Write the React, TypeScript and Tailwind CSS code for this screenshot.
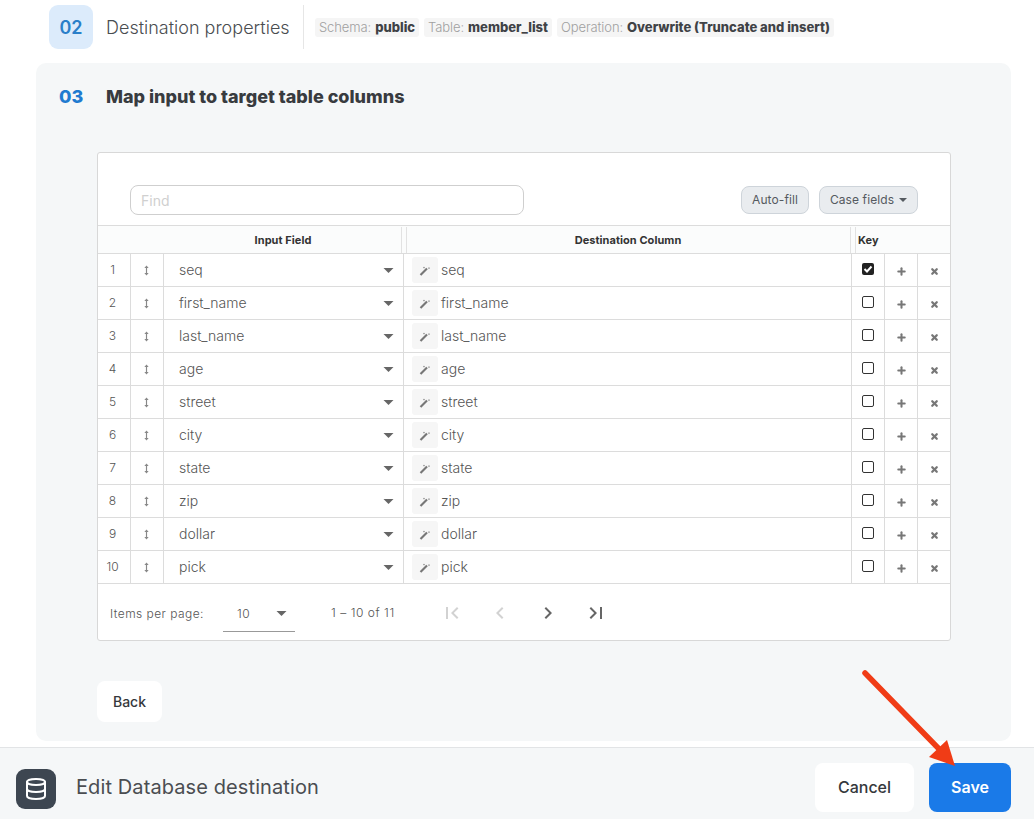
import { Database, Plus, X } from "lucide-react"

const fields = ["seq", "first_name", "last_name", "age", "street", "city", "state", "zip", "dollar", "pick"]

const cols = "grid grid-cols-[33px_33px_240px_448px_33px_33px_1fr]"

function Chip({ label, value }: { label: string; value: string }) {
  return (
    <span className="h-[19px] flex items-center px-[4px] rounded-[3px] bg-[#f5f5f5] text-[13px] whitespace-nowrap">
      <span className="text-[#a0a0a0] font-light tracking-[-0.1px]">{label}:</span>
      <span className="ml-[4px] font-extrabold text-[#3f4246]">{value}</span>
    </span>
  )
}

function Caret({ className }: { className: string }) {
  return (
    <svg viewBox="0 0 10 5" className={className}>
      <path d="M0 0h10L5 5z" fill="currentColor" />
    </svg>
  )
}

function Grip() {
  return (
    <svg viewBox="0 0 6 12" className="w-[5px] h-[11px] text-[#888]">
      <path d="M3 0l2.600 3H3.700v6h1.900L3 12 .4 9h1.900V3H.4z" fill="currentColor" />
    </svg>
  )
}

function Wand() {
  return (
    <svg viewBox="0 0 12 12" className="w-[12px] h-[12px] text-[#777]">
      <path d="M1.500 11L8 4.500" stroke="currentColor" strokeWidth="2.200" fill="none" />
      <path d="M5 2.500l.3.800.8.300-.8.300-.3.800-.3-.8-.8-.3.8-.3zM10 3l.3.800.8.300-.8.300-.3.800-.3-.8-.8-.3.8-.3z" fill="currentColor" />
    </svg>
  )
}

function PageIcon({ d, muted }: { d: string; muted?: boolean }) {
  return (
    <span className="w-[48px] h-[24px] flex items-center justify-center">
      <svg viewBox="0 0 24 24" className={`w-[24px] h-[24px] ${muted ? "text-[#d2d2d2]" : "text-[#666]"}`}>
        <path d={d} fill="currentColor" />
      </svg>
    </span>
  )
}

function Row({ index, name }: { index: number; name: string }) {
  return (
    <div className={`${cols} h-[33px] border-b border-[#dcdcdc] text-[14px] font-light text-[#555]`}>
      <div className="border-r border-[#dcdcdc] flex items-center justify-center pr-[3px] pb-[1px] text-[12px]">{index}</div>
      <div className="border-r border-[#dcdcdc] flex items-center justify-center pr-[1px]">
        <Grip />
      </div>
      <div className="border-r border-[#dcdcdc] flex items-center justify-between pl-[15px] pr-[9px]">
        <span className="pb-[2px]">{name}</span>
        <Caret className="w-[11px] h-[5px] text-[#666]" />
      </div>
      <div className="border-r border-[#dcdcdc] flex items-center pl-[8px]">
        <span className="w-[26px] h-[26px] rounded-[3px] bg-[#f6f6f6] flex items-center justify-center">
          <Wand />
        </span>
        <span className="ml-[3px] pb-[2px]">{name}</span>
      </div>
      <div className="border-r border-[#dcdcdc] flex items-center justify-center pb-[3px]">
        {index === 1 ? (
          <span className="w-[12px] h-[12px] rounded-[2px] bg-[#222] flex items-center justify-center">
            <svg viewBox="0 0 12 12" className="w-[12px] h-[12px]">
              <path d="M2.500 6l2.500 2.500L9.500 3.500" stroke="#fff" strokeWidth="2" fill="none" />
            </svg>
          </span>
        ) : (
          <span className="w-[12px] h-[12px] rounded-[2px] border border-[#333] bg-white" />
        )}
      </div>
      <div className="border-r border-[#dcdcdc] flex items-center justify-center pt-[2px]">
        <Plus size={11} strokeWidth={4.500} className="text-[#777]" />
      </div>
      <div className="flex items-center justify-center pt-[2px]">
        <X size={9} strokeWidth={6} className="text-[#777]" />
      </div>
    </div>
  )
}

export default function App() {
  return (
    <div className="relative h-[819px] w-[1034px] overflow-hidden bg-white flex flex-col font-['Inter',sans-serif]">
      {/* step 02 */}
      <div className="h-[63px] shrink-0 flex items-start pt-[5px] pl-[49px]">
        <div className="w-[44px] h-[44px] rounded-[9px] bg-[#dcebfb] flex items-center justify-center text-[18px] font-semibold text-[#2a7fc9]">
          02
        </div>
        <div className="ml-[13px] h-[44px] flex items-center pr-[12px] border-r border-[#e6e6e6] text-[18px] font-light text-[#4a4d50] w-[198px] whitespace-nowrap">
          Destination properties
        </div>
        <div className="ml-[11px] h-[44px] flex items-center gap-[5px] pt-[1px]">
          <Chip label="Schema" value="public" />
          <Chip label="Table" value="member_list" />
          <Chip label="Operation" value="Overwrite (Truncate and insert)" />
        </div>
      </div>

      {/* step 03 */}
      <div className="ml-[36px] w-[975px] h-[678px] shrink-0 rounded-[10px] bg-[#f5f7f8] flex flex-col">
        <div className="h-[89px] shrink-0 flex items-start pt-[23px] pl-[23px]">
          <span className="w-[47px] text-[18px] leading-[22px] font-extrabold text-[#1f7bd0]">03</span>
          <span className="text-[18px] leading-[22px] font-extrabold text-[#383b3f]">Map input to target table columns</span>
        </div>

        <div className="ml-[61px] w-[854px] h-[489px] shrink-0 bg-white border border-[#d8d8d8] rounded-[3px] flex flex-col">
          <div className="h-[72px] shrink-0 flex items-start pl-[32px] pr-[32px] pt-[32px]">
            <div className="w-[394px] h-[30px] rounded-[8px] border border-[#cfcfcf] flex items-center px-[10px] text-[14px] text-[#d0d0d0]">
              Find
            </div>
            <div className="ml-auto mt-[1px] flex items-center gap-[10px] text-[12px] tracking-[0.1px] text-[#555a60]">
              <button className="h-[28px] w-[68px] rounded-[8px] border border-[#ced4da] bg-[#e9ecef]">Auto-fill</button>
              <button className="h-[28px] w-[99px] rounded-[8px] border border-[#ced4da] bg-[#e9ecef] flex items-center justify-center gap-[5px]">
                Case fields
                <Caret className="w-[8px] h-[4px]" />
              </button>
            </div>
          </div>

          <div className={`${cols} h-[29px] shrink-0 border-y border-[#dcdcdc] bg-[#fbfcfc] text-[11px] font-bold tracking-[0.05px] text-[#333]`}>
            <div className="relative col-span-3 flex items-center pl-[66px] pt-[1px]">
              <span className="w-[238px] text-center">Input Field</span>
              <span className="absolute right-[2px] top-[1px] bottom-0 w-[1px] bg-[#e2e2e2]" />
            </div>
            <div className="relative flex items-center justify-center pt-[1px]">
              <span className="absolute left-[2px] top-[1px] bottom-0 w-[1px] bg-[#e2e2e2]" />
              Destination Column
              <span className="absolute right-[1px] top-[1px] bottom-0 w-[1px] bg-[#e2e2e2]" />
            </div>
            <div className="relative col-span-3 flex items-center pl-[6px] pt-[1px]">
              <span className="absolute left-[3px] top-[1px] bottom-0 w-[1px] bg-[#e2e2e2]" />
              Key
            </div>
          </div>

          {fields.map((name, i) => (
            <Row key={name} index={i + 1} name={name} />
          ))}

          <div className="flex-1 flex items-center pl-[12px] pt-[1px] text-[#555] font-light text-[12px] tracking-[0.45px]">
            <span className="w-[113px] pt-[2px] whitespace-nowrap">Items per page:</span>
            <div className="w-[72px] h-[36px] mt-[3px] border-b border-[#999] flex items-center justify-between pl-[14px] pr-[8px]">
              <span>10</span>
              <Caret className="w-[11px] h-[5px] text-[#666]" />
            </div>
            <span className="ml-[36px] w-[90px] whitespace-nowrap tracking-[0.55px]">1 – 10 of 11</span>
            <div className="ml-[7px] flex items-center">
              <PageIcon muted d="M18.41 16.59L13.82 12l4.59-4.59L17 6l-6 6 6 6zM6 6h2v12H6z" />
              <PageIcon muted d="M15.41 7.41L14 6l-6 6 6 6 1.41-1.41L10.83 12z" />
              <PageIcon d="M10 6L8.59 7.41 13.17 12l-4.58 4.59L10 18l6-6z" />
              <PageIcon d="M5.59 7.41L10.18 12l-4.59 4.59L7 18l6-6-6-6zM16 6h2v12h-2z" />
            </div>
          </div>
        </div>

        <button className="ml-[61px] mt-[40px] w-[65px] h-[41px] rounded-[8px] bg-white text-[14px] font-medium text-[#35383c]">
          Back
        </button>
      </div>

      {/* footer */}
      <div className="mt-[6px] flex-1 border-t border-[#e2e4e6] bg-[#f5f7f8] flex items-center pl-[16px] pr-[23px]">
        <div className="w-[40px] h-[40px] mt-[10px] rounded-[9px] bg-[#3d4651] flex items-center justify-center">
          <Database size={24} strokeWidth={2} className="text-white" />
        </div>
        <span className="ml-[20px] mt-[7px] text-[20px] tracking-[0.1px] text-[#4a4d51]">Edit Database destination</span>
        <button className="ml-auto w-[99px] h-[49px] mt-[8px] pb-[2px] rounded-[8px] bg-white text-[16px] font-medium text-[#35383c]">
          Cancel
        </button>
        <button className="ml-[15px] w-[82px] h-[49px] mt-[8px] pb-[2px] rounded-[8px] bg-[#1a7ae8] text-[16px] font-semibold text-white">
          Save
        </button>
      </div>

      {/* annotation arrow */}
      <svg viewBox="0 0 1034 819" className="absolute inset-0 w-[1034px] h-[819px] pointer-events-none">
        <path d="M865 673L942 752" stroke="#f03c16" strokeWidth="5.500" strokeLinecap="round" fill="none" />
        <path d="M955 766L929 757L947 740z" fill="#f03c16" />
      </svg>
    </div>
  )
}
